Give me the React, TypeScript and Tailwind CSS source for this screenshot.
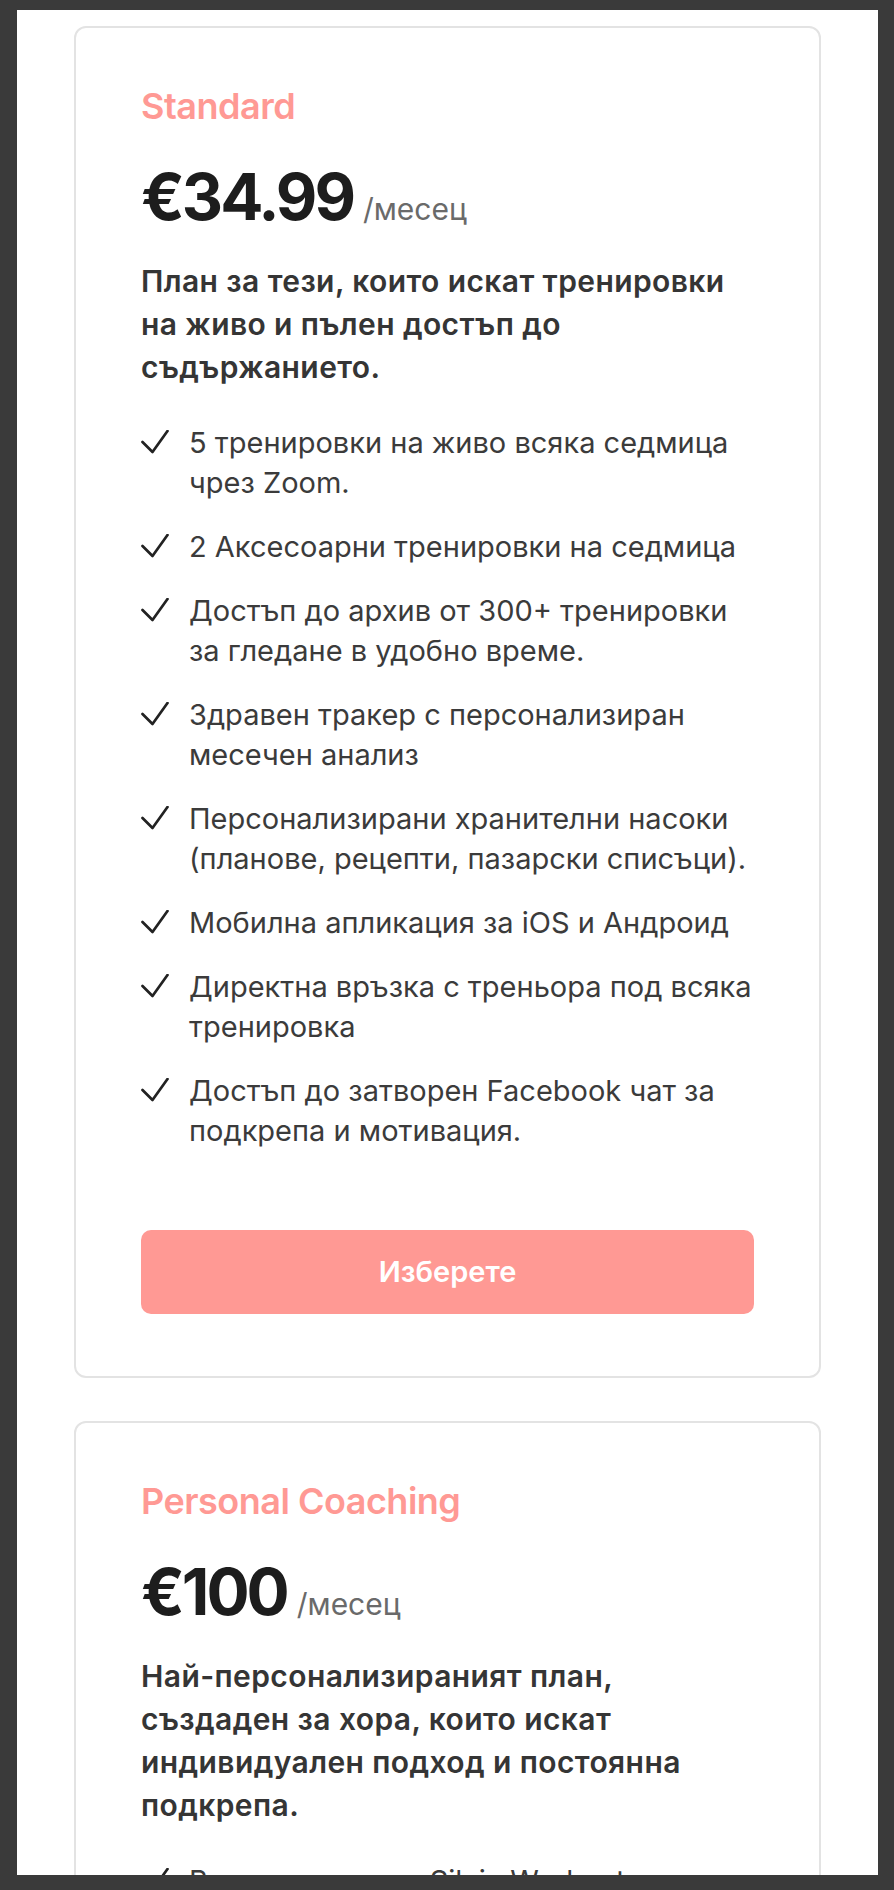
import React from "react";

const font = { fontFamily: "Inter, 'Noto Sans', sans-serif" };

function Check() {
  return (
    <svg width="28" height="24" viewBox="0 0 28 24" className="shrink-0 mt-[7px]" fill="none">
      <path d="M1.5 12 L11.5 22 L26.5 1" stroke="#222" strokeWidth="2.7" strokeLinecap="round" strokeLinejoin="round" />
    </svg>
  );
}

type Plan = {
  name: string;
  price: string;
  desc: string;
  items: string[];
};

const plans: Plan[] = [
  {
    name: "Standard",
    price: "€34.99",
    desc: "План за тези, които искат тренировки на живо и пълен достъп до съдържанието.",
    items: [
      "5 тренировки на живо всяка седмица чрез Zoom.",
      "2 Аксесоарни тренировки на седмица",
      "Достъп до архив от 300+ тренировки за гледане в удобно време.",
      "Здравен тракер с персонализиран месечен анализ",
      "Персонализирани хранителни насоки (планове, рецепти, пазарски списъци).",
      "Мобилна апликация за iOS и Андроид",
      "Директна връзка с треньора под всяка тренировка",
      "Достъп до затворен Facebook чат за подкрепа и мотивация.",
    ],
  },
  {
    name: "Personal Coaching",
    price: "€100",
    desc: "Най-персонализираният план, създаден за хора, които искат индивидуален подход и постоянна подкрепа.",
    items: [
      "Всичко от плана Silvia Workouts Standard.",
      "Индивидуална програма, изготвена специално за вас.",
      "Седмични консултации с треньора.",
    ],
  },
];

function Card({ plan }: { plan: Plan }) {
  return (
    <div className="rounded-xl border-2 border-[#e3e3e3] bg-white px-[65px] pt-[57px] pb-[62px]">
      <div className="text-[36px] leading-[43px] font-semibold text-[#ff9994] tracking-[-0.5px]">{plan.name}</div>
      <div className="mt-[37px] flex items-baseline">
        <span className="text-[64px] leading-[64px] font-bold text-[#1d1d1d] tracking-[-3px]">{plan.price}</span>
        <span className="ml-[10px] text-[30px] leading-[30px] text-[#6a6a6a]">/месец</span>
      </div>
      <p className="mt-[31px] text-[30px] leading-[43px] font-semibold text-[#353535] tracking-[0.4px]">{plan.desc}</p>
      <ul className="mt-[34px] flex flex-col gap-[24px]">
        {plan.items.map((it, i) => (
          <li key={i} className="flex gap-[20px]">
            <Check />
            <span className="text-[29px] leading-[40px] text-[#3b3b3b]">{it}</span>
          </li>
        ))}
      </ul>
      <button className="mt-[79px] h-[84px] w-full rounded-[10px] bg-[#ff9994] text-[29px] font-semibold text-white">
        Изберете
      </button>
    </div>
  );
}

export default function App() {
  return (
    <div style={font} className="h-[1890px] overflow-hidden bg-[#3a3a3a] pt-[10px] pl-[17px] pr-[16px] pb-[15px]">
      <div className="h-full overflow-hidden bg-white px-[57px] pt-[16px]">
        <div className="flex flex-col gap-[43px]">
          {plans.map((p) => (
            <Card key={p.name} plan={p} />
          ))}
        </div>
      </div>
    </div>
  );
}
